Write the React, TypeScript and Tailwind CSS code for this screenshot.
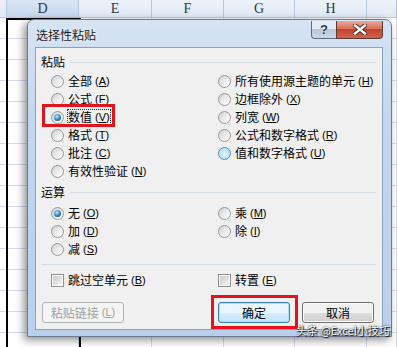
import type { ReactNode } from 'react'

// ─── Fonts ───────────────────────────────────────────────
const CJK  = "font-['Noto_Sans_CJK_SC','Noto_Sans',sans-serif]"
const HEAD = "font-['Liberation_Serif',serif]"

// ─── Sheet background (columns D..I) ─────────────────────
const COLS = [
  { key: '',  w: 'w-[7px]'  },
  { key: 'D', w: 'w-[72px]' },
  { key: 'E', w: 'w-[73px]' },
  { key: 'F', w: 'w-[72px]' },
  { key: 'G', w: 'w-[71px]' },
  { key: 'H', w: 'w-[72px]' },
  { key: '',  w: 'w-[30px]' },
]

function Sheet() {
  return (
    <div className="flex flex-col">
      <div className="flex h-[18px]">
        {COLS.map((c, i) => (
          <div
            key={i}
            className={[
              'shrink-0 h-full flex items-center justify-center border-r border-b border-[#b7c7da]',
              'text-[14px] text-[#2b3a4c]', HEAD, c.w,
              c.key === 'D'
                ? 'bg-[linear-gradient(to_bottom,#d9e5f3,#c6d7ec)]'
                : 'bg-[linear-gradient(to_bottom,#eef3f9,#dfe8f3)]',
            ].join(' ')}
          >
            {c.key}
          </div>
        ))}
      </div>
      {Array.from({ length: 16 }).map((_, r) => (
        <div key={r} className="flex h-[21px]">
          {COLS.map((c, i) => (
            <div key={i} className={`shrink-0 h-full bg-white border-r border-b border-[#d4dce8] ${c.w}`} />
          ))}
        </div>
      ))}
    </div>
  )
}

// ─── Win7 controls ───────────────────────────────────────
function Radio({ checked, hot }: { checked?: boolean; hot?: boolean }) {
  return (
    <span
      className={[
        'w-[13px] h-[13px] rounded-full border flex items-center justify-center shrink-0',
        hot
          ? 'border-[#4f8fc4] bg-[radial-gradient(circle_at_50%_55%,#e4f4ff,#a9d6f7)]'
          : 'border-[#979797] bg-[linear-gradient(135deg,#cfcfcf,#f6f6f6_70%,#ffffff)]',
      ].join(' ')}
    >
      {checked && (
        <span className="w-[7px] h-[7px] rounded-full bg-[radial-gradient(circle_at_40%_35%,#bfe6ff,#2b82c9_55%,#0c3f76)]" />
      )}
    </span>
  )
}

function Check() {
  return (
    <span className="w-[13px] h-[13px] border border-[#8e8f8f] shrink-0 flex items-center justify-center bg-white">
      <span className="w-[9px] h-[9px] bg-[linear-gradient(135deg,#cbcbcb,#f4f4f4)]" />
    </span>
  )
}

function Key({ k }: { k: string }) {
  return (
    <span className="ml-[3px] font-['Liberation_Sans',sans-serif] text-[11px]">
      (<u>{k}</u>)
    </span>
  )
}

interface OptProps {
  label:    string
  k:        string
  checked?: boolean
  hot?:     boolean
  focus?:   boolean
  box?:     boolean
}

function Opt({ label, k, checked, hot, focus, box }: OptProps) {
  return (
    <div className="relative h-[18px] flex items-center gap-[4px]">
      <Radio checked={checked} hot={hot} />
      <span className={`flex items-center leading-[14px] ${focus ? 'outline-1 outline-dotted outline-[#333]' : ''}`}>
        {label}<Key k={k} />
      </span>
      {box && (
        <span className="absolute -left-[9px] -top-[4px] w-[73px] h-[23px] border-[3px] border-[#e3121c]" />
      )}
    </div>
  )
}

function GroupHead({ children }: { children: ReactNode }) {
  return (
    <div className="h-[18px] flex items-center pl-[5px] pr-[6px]">
      <span>{children}</span>
      <span className="flex-1 h-px bg-[#d3dce4] ml-[5px]" />
    </div>
  )
}

function Btn({ children, def, disabled, w }: { children: ReactNode; def?: boolean; disabled?: boolean; w: string }) {
  return (
    <div
      className={[
        'h-[21px] rounded-[3px] border flex items-center justify-center text-[12px]', w,
        disabled
          ? 'border-[#adb2b5] bg-[#f4f4f4] text-[#a0a0a0]'
          : def
            ? 'border-[#3c7fb1] bg-[linear-gradient(to_bottom,#eaf6fd_50%,#d9eefa_50%,#bee6fd)] text-black shadow-[inset_0_0_0_1px_#a8e2fb]'
            : 'border-[#707070] bg-[linear-gradient(to_bottom,#f2f2f2_50%,#dddddd_50%,#cfcfcf)] text-black shadow-[inset_0_0_0_1px_#fcfcfc]',
      ].join(' ')}
    >
      {children}
    </div>
  )
}

// ─── Dialog ──────────────────────────────────────────────
function Dialog() {
  return (
    <div className={`absolute left-[27px] top-[19px] w-[365px] h-[318px] rounded-t-[7px] border border-[#6b7c91] bg-[linear-gradient(to_bottom,#d6e4f4,#c2d7ef_30%,#b8d0ec)] shadow-[-3px_3px_8px_rgba(0,0,0,0.45)] flex flex-col ${CJK}`}>
      {/* title bar */}
      <div className="h-[27px] flex items-start shrink-0">
        <span className="pl-[8px] pt-[6px] text-[12px] text-[#1b1b1b] [text-shadow:0_0_4px_#ffffff]">选择性粘贴</span>
        <div className="ml-auto mr-[8px] mt-[1px] flex">
          <div className="w-[25px] h-[18px] rounded-bl-[4px] border border-r-0 border-t-0 border-[#5d6b7d] bg-[linear-gradient(to_bottom,#e3ebf5_45%,#b9c9dd_50%,#c9d8ea)] flex items-center justify-center">
            <span className="font-['Liberation_Sans',sans-serif] font-bold text-[13px] leading-none text-[#2e3a48] [text-shadow:0_0_1px_#fff]">?</span>
          </div>
          <div className="w-[47px] h-[18px] rounded-br-[4px] border border-t-0 border-[#5d3a33] bg-[linear-gradient(to_bottom,#e9a99a,#d8705c_45%,#c2432e_50%,#d2634a)] flex items-center justify-center">
            <svg width="14" height="11" viewBox="0 0 14 11">
              <path d="M2 1.5 L12 9.5 M12 1.5 L2 9.5" stroke="#4a1f18" strokeWidth="4.2" strokeLinecap="square" />
              <path d="M2 1.5 L12 9.5 M12 1.5 L2 9.5" stroke="#ffffff" strokeWidth="2.4" strokeLinecap="square" />
            </svg>
          </div>
        </div>
      </div>

      {/* client area */}
      <div className="flex-1 ml-[7px] mr-[8px] mb-[6px] border border-[#8da2b9] bg-[#f0f0f0] text-[12px] text-black flex flex-col pt-[5px]">
        <GroupHead>粘贴</GroupHead>
        <div className="grid grid-cols-[167px_1fr] pl-[15px] mt-[1px]">
          <div className="flex flex-col">
            <Opt label="全部" k="A" />
            <Opt label="公式" k="F" />
            <Opt label="数值" k="V" checked focus box />
            <Opt label="格式" k="T" />
            <Opt label="批注" k="C" />
            <Opt label="有效性验证" k="N" />
          </div>
          <div className="flex flex-col">
            <Opt label="所有使用源主题的单元" k="H" />
            <Opt label="边框除外" k="X" />
            <Opt label="列宽" k="W" />
            <Opt label="公式和数字格式" k="R" />
            <Opt label="值和数字格式" k="U" hot />
          </div>
        </div>

        <div className="mt-[3px]">
          <GroupHead>运算</GroupHead>
        </div>
        <div className="grid grid-cols-[167px_1fr] pl-[15px] mt-[3px]">
          <div className="flex flex-col">
            <Opt label="无" k="O" checked />
            <Opt label="加" k="D" />
            <Opt label="减" k="S" />
          </div>
          <div className="flex flex-col">
            <Opt label="乘" k="M" />
            <Opt label="除" k="I" />
          </div>
        </div>

        <div className="mt-[6px] ml-[5px] mr-[6px] h-px bg-[#d3dce4]" />

        <div className="grid grid-cols-[167px_1fr] pl-[15px] mt-[6px]">
          <div className="h-[18px] flex items-center gap-[4px]">
            <Check />
            <span className="flex items-center">跳过空单元<Key k="B" /></span>
          </div>
          <div className="h-[18px] flex items-center gap-[4px]">
            <Check />
            <span className="flex items-center">转置<Key k="E" /></span>
          </div>
        </div>

        <div className="flex mt-[13px] ml-[6px]">
          <Btn w="w-[82px]" disabled>粘贴链接<Key k="L" /></Btn>
          <div className="relative ml-[94px]">
            <Btn w="w-[72px]" def>确定</Btn>
            <span className="absolute -left-[7px] -top-[7px] w-[87px] h-[34px] border-[3px] border-[#e3121c]" />
          </div>
          <div className="ml-[12px]">
            <Btn w="w-[72px]">取消</Btn>
          </div>
        </div>
      </div>
    </div>
  )
}

export default function App() {
  return (
    <div className="relative w-[397px] h-[347px] overflow-hidden bg-white">
      <Sheet />
      {/* selected column D */}
      <div className="absolute left-[6px] top-[18px] w-[75px] h-[340px] border-2 border-b-0 border-black" />
      <Dialog />
      <span className={`absolute left-[296px] top-[323px] whitespace-nowrap text-[11px] leading-[14px] text-white ${CJK} [text-shadow:0_0_2px_#000,1px_1px_1px_#000]`}>
        头条 @Excel小技巧
      </span>
    </div>
  )
}
